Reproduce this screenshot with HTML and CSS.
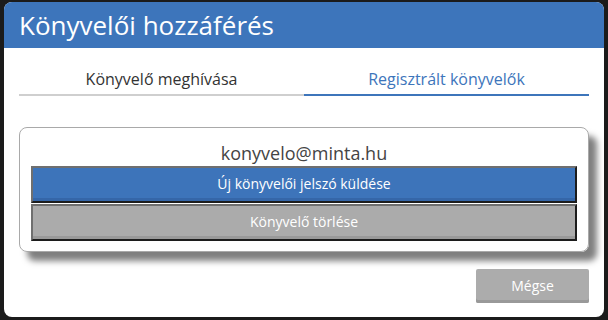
FILE: index.html
```html
<!DOCTYPE html>
<html lang="hu">
<head>
<meta charset="utf-8">
<title>Könyvelői hozzáférés</title>
<link rel="stylesheet" href="styles.css">
</head>
<body>
<div class="dialog">
  <div class="header">Könyvelői hozzáférés</div>
  <div class="content">
    <div class="tabs">
      <div class="tab">Könyvelő meghívása</div>
      <div class="tab active">Regisztrált könyvelők</div>
    </div>
    <div class="card">
      <div class="email">konyvelo@minta.hu</div>
      <button class="btn btn-blue">Új könyvelői jelszó küldése</button>
      <button class="btn btn-gray">Könyvelő törlése</button>
    </div>
    <div class="footer">
      <button class="cancel">Mégse</button>
    </div>
  </div>
</div>
</body>
</html>
```

FILE: styles.css
```css
html, body {
  margin: 0;
  padding: 0;
  background: #1b1b1b;
  font-family: "Open Sans", "Noto Sans", sans-serif;
}
body {
  padding: 2px 4px 0 4px;
}
.dialog {
  width: 600px;
  height: 315px;
  background: #fff;
  border-radius: 8px;
  overflow: hidden;
  box-sizing: border-box;
}
.header {
  height: 46px;
  background: #3d75bb;
  color: #fff;
  font-size: 26px;
  line-height: 46px;
  padding-left: 15px;
}
.content {
  padding: 0 15px;
}
.tabs {
  display: flex;
  margin-top: 14px;
}
.tab {
  flex: 1;
  text-align: center;
  font-size: 16px;
  line-height: 20px;
  height: 25px;
  padding-top: 7px;
  color: #333;
  border-bottom: 2px solid #cfcfcf;
}
.tab.active {
  color: #3d75bb;
  border-bottom-color: #3d75bb;
}
.card {
  margin-top: 31px;
  height: 125px;
  box-sizing: border-box;
  border: 1px solid #a9a9a9;
  border-radius: 8px;
  padding: 0 11px;
  box-shadow: 8px 9px 6px rgba(0, 0, 0, 0.5);
  display: flex;
  flex-direction: column;
}
.email {
  text-align: center;
  font-size: 18px;
  line-height: 26px;
  padding-top: 12px;
  color: #444;
}
.btn {
  display: block;
  width: 100%;
  height: 37px;
  box-sizing: border-box;
  border-style: solid;
  border-width: 2px;
  border-color: #6f6f6f #1c1c1c #1c1c1c #6f6f6f;
  color: #fff;
  font-family: inherit;
  font-size: 14px;
  padding: 0 0 2px 0;
  margin: 0;
}
.btn-blue {
  background: #3d74ba;
  box-shadow: inset 0 -3px 0 #3566a8;
}
.btn-gray {
  margin-top: 1px;
  background: #ababab;
  box-shadow: inset 0 -3px 0 #999;
}
.footer {
  display: flex;
  justify-content: flex-end;
  margin-top: 17px;
}
.cancel {
  width: 113px;
  height: 34px;
  border: none;
  border-radius: 2px;
  background: #acacac;
  box-shadow: inset 0 -3px 0 #999;
  color: #fff;
  font-family: inherit;
  font-size: 14px;
  padding: 0 0 2px 0;
}
```
